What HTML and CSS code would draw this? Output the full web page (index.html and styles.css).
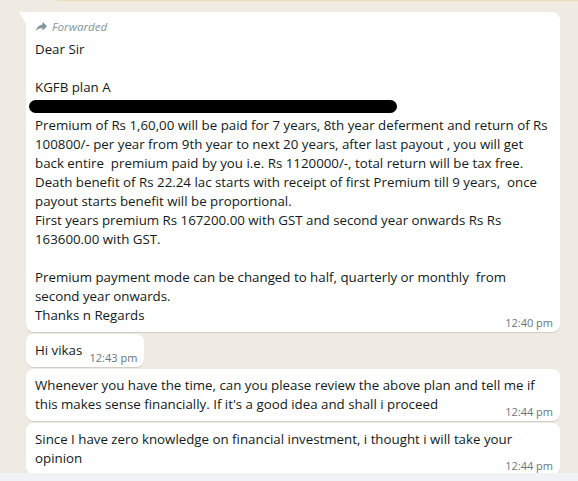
FILE: index.html
```html
<!DOCTYPE html>
<html lang="en">
<head>
    <meta charset="UTF-8">
    <meta name="viewport" content="width=device-width, initial-scale=1.0">
    <title>Chat</title>
    <link rel="stylesheet" href="styles.css">
</head>
<body>
    <div class="chat">
        <div class="notice"></div>

        <div class="msg msg-first">
            <div class="fwd">
                <svg class="fwd-icon" viewBox="0 0 24 18" width="13" height="9">
                    <path d="M14 1.2c0-.7.8-1 1.3-.5l6.9 6.6c.6.6.6 1.5 0 2.1l-6.9 6.6c-.5.5-1.3.1-1.3-.5v-3.3C8.6 12.1 4.6 13.8 2 17.4c-.3.4-.9.2-.8-.3C2.3 10.6 6.6 6 14 5.2V1.2z"/>
                </svg>
                <span>Forwarded</span>
            </div>
            <div class="text">Dear Sir

KGFB plan A
<span class="redact"></span>
Premium of Rs 1,60,00 will be paid for 7 years, 8th year deferment and return of Rs 100800/- per year from 9th year to next 20 years, after last payout , you will get back entire  premium paid by you i.e. Rs 1120000/-, total return will be tax free.
Death benefit of Rs 22.24 lac starts with receipt of first Premium till 9 years,  once payout starts benefit will be proportional.
First years premium Rs 167200.00 with GST and second year onwards Rs Rs 163600.00 with GST.

Premium payment mode can be changed to half, quarterly or monthly  from second year onwards.
Thanks n Regards<span class="spacer"></span></div>
            <div class="meta">12:40 pm</div>
        </div>

        <div class="msg">
            <div class="text">Hi vikas<span class="spacer"></span></div>
            <div class="meta">12:43 pm</div>
        </div>

        <div class="msg">
            <div class="text">Whenever you have the time, can you please review the above plan and tell me if this makes sense financially. If it's a good idea and shall i proceed<span class="spacer"></span></div>
            <div class="meta">12:44 pm</div>
        </div>

        <div class="msg">
            <div class="text">Since I have zero knowledge on financial investment, i thought i will take your opinion<span class="spacer"></span></div>
            <div class="meta">12:44 pm</div>
        </div>
    </div>
    <div class="footer"></div>
</body>
</html>
```
FILE: styles.css
```css
/* page */
body {
    margin: 0;
    background-color: #efeae2;
    font-family: "Open Sans", "Noto Sans", sans-serif;
    color: #111b21;
}

.chat {
    height: 473px;
    overflow: hidden;
    display: flex;
    flex-direction: column;
    align-items: flex-start;
    padding: 0 18px 0 26px;
    box-sizing: border-box;
}

/* bottom edge of the yellow system notice above */
.notice {
    align-self: stretch;
    height: 1px;
    margin: 0 -18px 11px 31px;
    background-color: #fcf4cb;
    border-bottom: 1px solid #eadfb8;
}

/* message bubbles */
.msg {
    position: relative;
    max-width: 534px;
    box-sizing: border-box;
    background-color: #fff;
    border-radius: 7.5px;
    padding: 7px 7px 7px 9px;
    margin-bottom: 2px;
    box-shadow: 0 1px 0.5px rgba(11, 20, 26, 0.13);
}

.msg-first {
    border-top-left-radius: 0;
}

.msg-first::before {
    content: "";
    position: absolute;
    top: 0;
    left: -7px;
    width: 7px;
    height: 12px;
    background-color: #fff;
    clip-path: polygon(0 0, 100% 0, 100% 100%);
    border-top-left-radius: 1px;
}

.fwd {
    display: flex;
    align-items: center;
    gap: 4px;
    margin: -1px 0 6px 0;
    height: 16px;
    color: #8696a0;
    font-style: italic;
    font-size: 11.6px;
}

.fwd-icon {
    fill: #8696a0;
}

.text {
    font-size: 13.3px;
    line-height: 19px;
    white-space: pre-wrap;
    word-wrap: break-word;
}

.redact {
    display: inline-block;
    width: 368px;
    height: 13px;
    margin-left: -6px;
    vertical-align: -2px;
    background-color: #000;
    border-radius: 7px;
}

.spacer {
    display: inline-block;
    width: 55px;
}

.meta {
    float: right;
    margin: -10px 0 -5px 10px;
    font-size: 11px;
    line-height: 15px;
    color: #667781;
    white-space: nowrap;
}

.footer {
    height: 8px;
    background-color: #f0f2f5;
}
```
